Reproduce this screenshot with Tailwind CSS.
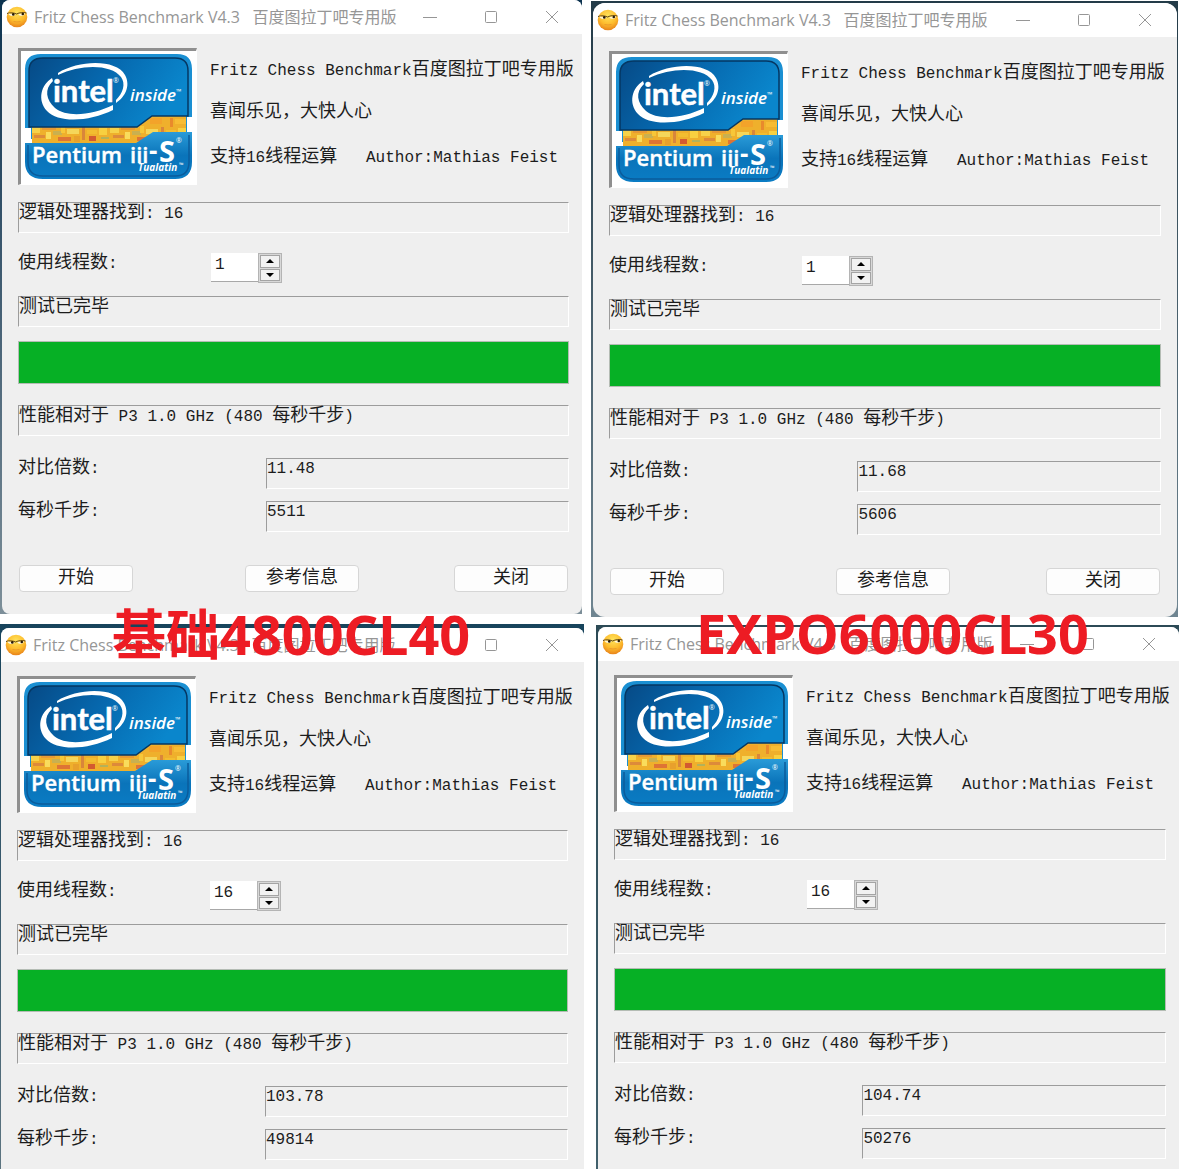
<!DOCTYPE html>
<html lang="zh-CN">
<head>
    <meta charset="UTF-8">
    <title>Fritz Chess Benchmark</title>
    <script src="https://cdn.jsdelivr.net/npm/@tailwindcss/browser@4"></script>
</head>
<body class="bg-white">
    <!-- shared drawings -->
    <svg width="0" height="0" class="absolute" aria-hidden="true">
        <defs>
            <linearGradient id="badgeTop" x1="0" y1="0" x2="1" y2="0.3">
                <stop offset="0" stop-color="#064a86"/>
                <stop offset="0.5" stop-color="#0668ae"/>
                <stop offset="1" stop-color="#0a86cc"/>
            </linearGradient>
            <linearGradient id="badgeBottom" x1="0" y1="0" x2="0" y2="1">
                <stop offset="0" stop-color="#2a9bd8"/>
                <stop offset="0.5" stop-color="#0a74ba"/>
                <stop offset="1" stop-color="#0a7cc4"/>
            </linearGradient>
            <radialGradient id="faceFill" cx="0.5" cy="0.3" r="0.7">
                <stop offset="0" stop-color="#ffe45c"/>
                <stop offset="0.6" stop-color="#fdbb2c"/>
                <stop offset="1" stop-color="#e8831a"/>
            </radialGradient>
            <pattern id="die" x="10" y="65" width="79" height="30" patternUnits="userSpaceOnUse">
                <rect width="79" height="30" fill="#efb02c"/>
                <rect x="0" y="12" width="9" height="5" fill="#f6d24a"/>
                <rect x="3" y="19" width="11" height="3" fill="#dd8a3a"/>
                <rect x="11" y="11" width="14" height="3" fill="#e79a34"/>
                <rect x="15" y="16" width="5" height="7" fill="#f9dc5c"/>
                <rect x="22" y="15" width="9" height="4" fill="#c9b050"/>
                <rect x="27" y="21" width="13" height="4" fill="#de7434"/>
                <rect x="30" y="10" width="4" height="7" fill="#f7c738"/>
                <rect x="36" y="13" width="12" height="5" fill="#f5d65a"/>
                <rect x="43" y="20" width="6" height="6" fill="#e8a02c"/>
                <rect x="51" y="11" width="3" height="13" fill="#d9863a"/>
                <rect x="56" y="14" width="10" height="4" fill="#f2bd30"/>
                <rect x="58" y="20" width="7" height="5" fill="#d35a30"/>
                <rect x="60" y="2" width="3" height="9" fill="#e98a2c"/>
                <rect x="68" y="12" width="8" height="7" fill="#f8d040"/>
                <rect x="70" y="21" width="8" height="2" fill="#b3b25a"/>
                <rect x="40" y="2" width="12" height="6" fill="#f3a32a"/>
                <rect x="65" y="3" width="12" height="5" fill="#f7bc34"/>
            </pattern>
        </defs>
        <symbol id="face" viewBox="0 0 22 22">
            <circle cx="11" cy="11" r="10.3" fill="url(#faceFill)"/>
            <path d="M1 7.5C4 6.5 8 6.7 10.5 8C13.500 6.500 17 6.300 20.500 7" fill="none" stroke="#4a3410" stroke-width="0.9"/>
            <path d="M2.300 7.500C3 10.500 8 10.800 9.700 8.200ZM12.300 8C13.500 10.800 18.500 10.300 19.300 7.300Z" fill="#fff6d8"/>
            <circle cx="7.300" cy="8.400" r="1.300" fill="#2a1c08"/>
            <circle cx="16.800" cy="8" r="1.300" fill="#2a1c08"/>
            <path d="M7.500 15.500Q11 16.500 14.500 15.500" fill="none" stroke="#e8962a" stroke-width="0.900"/>
        </symbol>
        <symbol id="badge" viewBox="0 0 175 133" preserveAspectRatio="none">
            <rect width="175" height="133" fill="#fff"/>
            <path d="M4 77V18Q4 3 20 3H156Q171 3 171 18V66H166V88H10V77Z" fill="#1a8fd2"/>
            <rect x="11" y="64" width="154" height="30" fill="url(#die)"/>
            <path d="M8 76V20Q8 7 22 7H154Q167 7 167 20V65H131L116 76Z" fill="url(#badgeTop)" stroke="#053763" stroke-width="1.500"/>
            <path d="M4 92H115L132 81H171V111Q171 128 154 128H22Q4 128 4 111Z" fill="url(#badgeBottom)"/>
            <path d="M7 94V111Q7 125 22 125H154Q168 125 168 111V84" fill="none" stroke="#0b5c9c" stroke-width="1.500"/>
            <path d="M31 27C20 34 16 49 26 60C37 72 68 71 92 59V54C72 64 46 67 34 57C25 49 23 38 32 30Z" fill="#fff"/>
            <path d="M37 22C58 9 95 8 104 24C110 35 104 46 95 52V49C102 42 105 33 100 26C90 13 60 13 37 24Z" fill="#fff"/>
            <g fill="#fff" font-family="Open Sans, Noto Sans, sans-serif">
                <text x="32" y="51" font-family="Lato, sans-serif" font-size="31" font-weight="700" stroke="#fff" stroke-width="0.500">intel</text>
                <text x="92" y="32" font-size="7">®</text>
                <text x="109" y="50" font-size="17" font-style="italic" font-weight="600">inside</text>
                <text x="155" y="43" font-size="7">™</text>
                <text x="11" y="112" font-size="22" font-weight="600" stroke="#fff" stroke-width="0.400">Pentium</text>
                <text x="109" y="112" font-size="22" font-weight="600" stroke="#fff" stroke-width="0.400">iii</text>
                <text x="128" y="109" font-size="26" font-weight="700">-</text>
                <text x="138" y="111" font-size="29" font-weight="700">S</text>
                <text x="155" y="92" font-size="7">®</text>
                <text x="117" y="120" font-size="10" font-style="italic" font-weight="700">Tualatin</text>
                <text x="158" y="116" font-size="6">™</text>
            </g>
        </symbol>
    </svg>

    <main id="windows" class="grid grid-cols-2 grid-rows-[auto_1fr] gap-y-[7px] min-h-screen"></main>

    <script>
        const runs = [
            { threads: 1, ratio: '11.48', knps: '5511', buttons: true,
              backdrop: 'mr-[9px] mb-[3px] pl-0.5 from-[#0c3350] to-[#7d8f99]', frame: 'rounded-lg', bar: '', body: 'pr-[13px]' },
            { threads: 1, ratio: '11.68', knps: '5606', buttons: true,
              backdrop: 'mt-px mr-1 pt-0.5 pl-0.5 pr-px from-[#233b48] to-[#6f8591]', frame: 'rounded-xl', bar: 'pr-0.5', body: 'pr-4' },
            { threads: 16, ratio: '103.78', knps: '49814', caption: '基础4800CL40',
              backdrop: 'mr-[7px] pt-[4px] pl-px from-[#17445c] to-[#5c7480]', frame: 'rounded-t-lg', bar: 'pr-0.5', body: 'pr-4',
              place: 'left-[112px] -top-[26px]' },
            { threads: 16, ratio: '104.74', knps: '50276', caption: 'EXPO6000CL30',
              backdrop: 'mt-px ml-[5px] mr-[3px] pt-0.5 pl-0.5 from-[#2c4a56] to-[#41606c]', frame: 'rounded-t-lg', bar: '', body: 'pr-[13px]',
              place: 'left-[100px] -top-[28px]' }
        ];

        // Chinese glyphs are set larger than the monospaced Latin ones
        function mix(text) {
            return text.replace(/[\u4e00-\u9fff\uff0c]+/g, '<span class="text-lg/5">$&</span>');
        }

        function sunken(text, tag = 'p', attrs = '') {
            return `<${tag} ${attrs} class="block flex-1 h-[31px] border border-t-[#9c9c9c] border-l-[#9c9c9c] border-r-white border-b-white leading-5 whitespace-pre">${mix(text)}</${tag}>`;
        }

        function windowHtml(run, i) {
            return `
            <section class="relative flex flex-col bg-linear-to-b ${run.backdrop}">
                <div class="flex-1 flex flex-col overflow-hidden bg-[#efefef] ${run.frame}">
                    <header class="flex items-center h-[34px] shrink-0 bg-white pl-1 text-[#969696] ${run.bar}">
                        <svg class="size-[22px] shrink-0"><use href="#face"/></svg>
                        <h1 class="ml-1.5 flex-1 whitespace-pre text-base font-['Open_Sans','Noto_Sans_CJK_SC',sans-serif]">Fritz Chess Benchmark V4.3   百度图拉丁吧专用版</h1>
                        <button aria-label="最小化" class="grid place-items-center w-[61px] h-8"><svg class="w-3.5 h-3.5" viewBox="0 0 14 14" fill="none" stroke="currentColor"><path d="M0 7.500H14"/></svg></button>
                        <button aria-label="最大化" class="grid place-items-center w-[61px] h-8"><svg class="w-3.5 h-3.5" viewBox="0 0 14 14" fill="none" stroke="currentColor"><rect x="1.500" y="1.500" width="11" height="11" rx="1"/></svg></button>
                        <button aria-label="关闭窗口" class="grid place-items-center w-[61px] h-8"><svg class="w-3.5 h-3.5" viewBox="0 0 14 14" fill="none" stroke="currentColor"><path d="M1 1L13 13M13 1L1 13"/></svg></button>
                    </header>
                    <div class="pt-[14px] pl-4 pb-[9px] text-base text-[#1c1c1c] font-['Liberation_Mono','Noto_Sans_CJK_SC',monospace] ${run.body}">
                        <div class="flex">
                            <div class="w-[179px] h-[137px] shrink-0 border-t-3 border-l-3 border-r border-b border-t-[#8f8f8f] border-l-[#8f8f8f] border-white">
                                <svg class="size-full" role="img" aria-label="intel inside Pentium iii-S Tualatin"><use href="#badge"/></svg>
                            </div>
                            <div class="pl-[13px] pt-3 leading-5">
                                <p class="whitespace-pre">${mix('Fritz Chess Benchmark百度图拉丁吧专用版')}</p>
                                <p class="whitespace-pre mt-[21px]">${mix('喜闻乐见，大快人心')}</p>
                                <p class="whitespace-pre mt-6">${mix('支持16线程运算   Author:Mathias Feist')}</p>
                            </div>
                        </div>
                        <div class="flex mt-[17px]">${sunken('逻辑处理器找到: 16')}</div>
                        <div class="flex h-[30px] mt-5">
                            <label for="threads${i}" class="w-[193px] leading-5">${mix('使用线程数:')}</label>
                            <input id="threads${i}" type="text" inputmode="numeric" value="${run.threads}" class="w-[47px] h-[29px] pl-1 pb-1 bg-white border-b border-[#a8a8a8]">
                            <div class="flex flex-col w-6 h-[30px] border border-[#b4b4b4] bg-[#d8d8d8] p-px gap-px">
                                <button aria-label="增加" class="flex-1 grid place-items-center border border-[#a4a4a4] bg-[#f2f2f2]"><svg class="w-2 h-1" viewBox="0 0 8 4"><path d="M0 4L4 0L8 4Z"/></svg></button>
                                <button aria-label="减少" class="flex-1 grid place-items-center border border-[#a4a4a4] bg-[#f2f2f2]"><svg class="w-2 h-1" viewBox="0 0 8 4"><path d="M0 0L4 4L8 0Z"/></svg></button>
                            </div>
                        </div>
                        <div class="flex mt-[13px]">${sunken('测试已完毕')}</div>
                        <progress value="100" max="100" aria-label="测试进度" class="block appearance-none w-full h-[43px] mt-3.5 border border-[#b4bcb4] [&::-webkit-progress-bar]:bg-[#e6e6e6] [&::-webkit-progress-value]:bg-[#06b025]"></progress>
                        <div class="flex mt-[21px]">${sunken('性能相对于 P3 1.0 GHz (480 每秒千步)')}</div>
                        <div class="flex mt-[22px]">
                            <label for="ratio${i}" class="w-[45%] leading-5">${mix('对比倍数:')}</label>
                            ${sunken(run.ratio, 'output', `id="ratio${i}"`)}
                        </div>
                        <div class="flex mt-3">
                            <label for="knps${i}" class="w-[45%] leading-5">${mix('每秒千步:')}</label>
                            ${sunken(run.knps, 'output', `id="knps${i}"`)}
                        </div>
                        ${run.buttons ? `
                        <div class="flex mt-[33px] mb-[13px] px-px">
                            <button class="w-[114px] h-[27px] rounded border border-[#d6d6d6] bg-[#fdfdfd] leading-5">${mix('开始')}</button>
                            <button class="w-[114px] h-[27px] ml-28 mr-auto rounded border border-[#d6d6d6] bg-[#fdfdfd] leading-5">${mix('参考信息')}</button>
                            <button class="w-[114px] h-[27px] rounded border border-[#d6d6d6] bg-[#fdfdfd] leading-5">${mix('关闭')}</button>
                        </div>` : ''}
                    </div>
                </div>
                ${run.caption ? `<h2 class="absolute ${run.place} z-10 text-[54px] leading-[72px] font-bold whitespace-nowrap text-[#ed1c24] font-['Noto_Sans','Noto_Sans_CJK_SC',sans-serif]">${run.caption}</h2>` : ''}
            </section>`;
        }

        document.getElementById('windows').innerHTML = runs.map(windowHtml).join('');
    </script>
</body>
</html>
